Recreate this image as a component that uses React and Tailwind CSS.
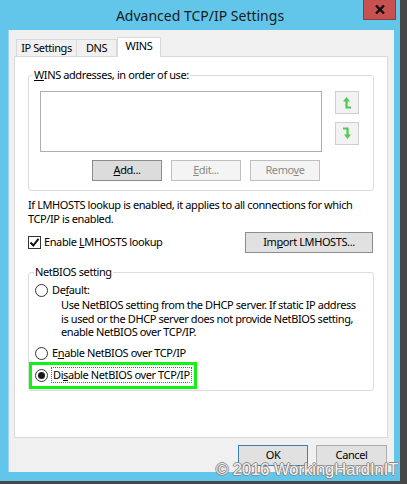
import React from 'react';

const Btn = ({ children, disabled, primary, className = '' }) => (
  <div
    className={
      'h-[21px] flex items-center justify-center border whitespace-nowrap ' +
      (disabled
        ? 'bg-[#f4f4f4] border-[#bfbfbf] text-[#8a8a8a] '
        : primary
        ? 'bg-[#e1e1e1] border-[#3c7fb1] text-black '
        : 'bg-[#e1e1e1] border-[#adadad] text-black ') +
      className
    }
  >
    {children}
  </div>
);

const Radio = ({ checked }) => (
  <div className="w-[13px] h-[13px] rounded-full border border-[#333333] bg-white flex items-center justify-center shrink-0">
    {checked && <div className="w-[7px] h-[7px] rounded-full bg-[#1a1a1a]" />}
  </div>
);

const ArrowBtn = ({ down }) => (
  <div className="w-[24px] h-[23px] border border-[#cfcfcf] bg-[#f2f2f2] flex items-center justify-center">
    <svg width="10" height="13" viewBox="0 0 10 13">
      {down ? (
        <>
          <path d="M1 1.5 H5.5 V8" fill="none" stroke="#4ccb4c" strokeWidth="2.2" />
          <path d="M2 7.5 L5.5 12 L9 7.5 Z" fill="#4ccb4c" />
        </>
      ) : (
        <>
          <path d="M4.5 5 V11.5 H9" fill="none" stroke="#4ccb4c" strokeWidth="2.2" />
          <path d="M1 5.5 L4.5 1 L8 5.5 Z" fill="#4ccb4c" />
        </>
      )}
    </svg>
  </div>
);

export default function App() {
  return (
    <div className="w-[407px] h-[484px] bg-[#474747] relative font-['Noto_Sans',sans-serif] text-[11px] tracking-[-0.4px] text-black">
      <div className="w-[400px] h-[481px] bg-[#62c6ea] flex flex-col">
        {/* title bar */}
        <div className="h-[30px] relative flex items-center justify-center">
          <span className="text-[14px] tracking-normal text-[#1b1b1b]">Advanced TCP/IP Settings</span>
          <div className="absolute top-0 right-[4px] w-[33px] h-[20px] bg-[#c75150] border border-[#8e3b3a] border-t-0 flex items-center justify-center">
            <svg width="10" height="9" viewBox="0 0 10 9">
              <path d="M1 0.5 L9 8.5 M9 0.5 L1 8.5" stroke="#111" strokeWidth="2.4" />
            </svg>
          </div>
        </div>

        {/* client */}
        <div className="ml-[8px] mr-[6px] h-[442px] bg-[#f0f0f0] border-l border-[#9fd4e8] flex flex-col">
          {/* tabs */}
          <div className="mt-[7px] ml-[7px] h-[19px] flex items-end">
            <div className="w-[61px] h-[17px] border border-b-0 border-[#d9d9d9] bg-[#f0f0f0] flex items-center justify-center">IP Settings</div>
            <div className="w-[40px] h-[17px] border border-l-0 border-b-0 border-[#d9d9d9] bg-[#f0f0f0] flex items-center justify-center">DNS</div>
            <div className="w-[44px] h-[20px] -mb-[1px] relative z-10 border border-b-0 border-[#d9d9d9] bg-white flex items-center justify-center pb-[2px]">WINS</div>
          </div>

          {/* panel */}
          <div className="ml-[5px] w-[374px] h-[382px] bg-white border border-[#d9d9d9] pt-[18px] pl-[13px]">
            {/* WINS group */}
            <div className="relative w-[346px] h-[116px] border border-[#dcdcdc] rounded-[3px] pt-[15px] pl-[11px]">
              <span className="absolute -top-[8px] left-[4px] bg-white px-[1px] leading-[14px] whitespace-nowrap">
                <u>W</u>INS addresses, in order of use:
              </span>
              <div className="flex">
                <div className="w-[282px] h-[61px] border border-[#abadb3] bg-white" />
                <div className="ml-[13px] flex flex-col gap-[8px]">
                  <ArrowBtn />
                  <ArrowBtn down />
                </div>
              </div>
              <div className="mt-[8px] ml-[52px] flex gap-[9px]">
                <Btn className="w-[70px] bg-[#dcdcdc]! border-[#8c8c8c]!"><span><u>A</u>dd...</span></Btn>
                <Btn disabled className="w-[70px]"><span><u>E</u>dit...</span></Btn>
                <Btn disabled className="w-[70px]"><span>Remo<u>v</u>e</span></Btn>
              </div>
            </div>

            <p className="mt-[7px] leading-[14px] whitespace-nowrap">
              If LMHOSTS lookup is enabled, it applies to all connections for which
              <br />
              TCP/IP is enabled.
            </p>

            <div className="mt-[6px] w-[345px] h-[21px] flex items-center">
              <div className="w-[13px] h-[13px] border border-[#333333] bg-white flex items-center justify-center">
                <svg width="11" height="11" viewBox="0 0 11 11">
                  <path d="M1.5 5.5 L4.3 8.5 L9.5 1.8" fill="none" stroke="#111" strokeWidth="2" />
                </svg>
              </div>
              <span className="ml-[3px] whitespace-nowrap">Enable <u>L</u>MHOSTS lookup</span>
              <Btn className="ml-auto w-[128px] border-[#8c8c8c]!"><span>Im<u>p</u>ort LMHOSTS...</span></Btn>
            </div>

            {/* NetBIOS group */}
            <div className="relative mt-[19px] w-[346px] h-[119px] border border-[#dcdcdc] rounded-[3px] pt-[10px]">
              <span className="absolute -top-[8px] left-[5px] bg-white px-[1px] leading-[14px] whitespace-nowrap">NetBIOS setting</span>
              <div className="ml-[6px] h-[15px] flex items-center gap-[4px]">
                <Radio />
                <span>De<u>f</u>ault:</span>
              </div>
              <p className="ml-[32px] leading-[13.5px] whitespace-nowrap">
                Use NetBIOS setting from the DHCP server. If static IP address
                <br />
                is used or the DHCP server does not provide NetBIOS setting,
                <br />
                enable NetBIOS over TCP/IP.
              </p>
              <div className="mt-[7px] ml-[6px] h-[15px] flex items-center gap-[4px]">
                <Radio />
                <span className="whitespace-nowrap">E<u>n</u>able NetBIOS over TCP/IP</span>
              </div>
              <div className="mt-[1px] w-[168px] h-[27px] border-[3px] border-[#13f113] flex items-center pl-[3px] gap-[3px]">
                <Radio checked />
                <span className="border border-dotted border-[#666] px-[1px] leading-[14px] whitespace-nowrap">Di<u>s</u>able NetBIOS over TCP/IP</span>
              </div>
            </div>
          </div>

          {/* dialog buttons */}
          <div className="mt-[7px] flex justify-end gap-[8px] pr-[7px]">
            <Btn primary className="w-[70px]">OK</Btn>
            <Btn className="w-[71px]">Cancel</Btn>
          </div>
        </div>
      </div>

      <div className="absolute left-[216px] top-[457px] font-['Liberation_Sans',sans-serif] text-[16.5px] tracking-normal whitespace-nowrap text-[#f2f2f2] [text-shadow:1px_0_0_#8a8a8a,-1px_0_0_#8a8a8a,0_1px_0_#8a8a8a,0_-1px_0_#8a8a8a]">
        © 2016 WorkingHardInIT
      </div>
    </div>
  );
}
